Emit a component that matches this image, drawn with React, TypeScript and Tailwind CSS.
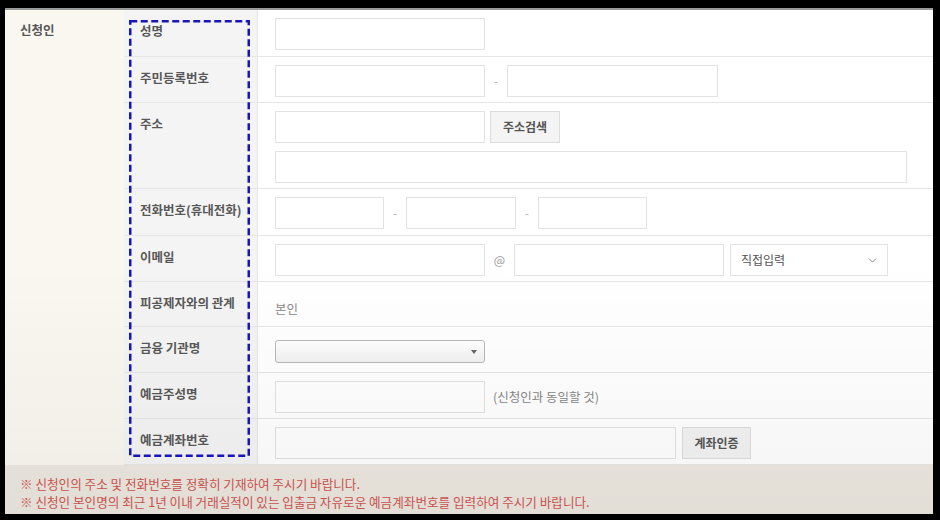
import React from 'react';
import { ChevronDown } from 'lucide-react';

const box = 'h-[32px] border border-[#e2e2e2] bg-white outline-none';
const dash = 'w-[22px] text-center text-[11px] text-[#aaa]';

interface RowProps {
  label: string;
  h: string;
  pad?: string;
  children: React.ReactNode;
}

const Row: React.FC<RowProps> = ({ label, h, pad = 'pt-[8px]', children }) => (
  <div className={`flex border-b border-[#e6e6e6] ${h}`}>
    <div className="w-[134px] shrink-0 border-r border-[#e6e6e6] bg-[#f4f4f4] pl-[16px] pt-[12px] text-[12.5px] leading-[18px] font-semibold text-[#585858]">
      {label}
    </div>
    <div className={`flex-1 pl-[17px] ${pad}`}>{children}</div>
  </div>
);

export default function App() {
  return (
    <div className="w-[940px] h-[520px] bg-black pt-[8px] pl-[5px] pr-[7px] pb-[6px] font-['Noto_Sans_CJK_KR','Noto_Sans',sans-serif]">
      <div className="relative h-full flex flex-col border-t-2 border-[#9a9a9a] bg-white">
        <div className="flex">
          <div className="w-[119px] shrink-0 bg-[#faf7f1] pl-[15px] pt-[11px] text-[12.5px] leading-[18px] font-semibold text-[#585858]">
            신청인
          </div>
          <div className="flex-1 flex flex-col">
            <Row label="성명" h="h-[47px]">
              <input className={`${box} w-[210px]`} />
            </Row>

            <Row label="주민등록번호" h="h-[46px]">
              <div className="flex items-center">
                <input className={`${box} w-[210px]`} />
                <span className={dash}>-</span>
                <input className={`${box} w-[211px]`} />
              </div>
            </Row>

            <Row label="주소" h="h-[86px]">
              <div className="flex flex-col gap-[8px]">
                <div className="flex gap-[5px]">
                  <input className={`${box} w-[210px]`} />
                  <button className="h-[32px] w-[70px] border border-[#dcdcdc] bg-[#f4f4f4] text-[12px] font-semibold text-[#555]">
                    주소검색
                  </button>
                </div>
                <input className={`${box} w-[632px]`} />
              </div>
            </Row>

            <Row label="전화번호(휴대전화)" h="h-[47px]">
              <div className="flex items-center">
                <input className={`${box} w-[109px]`} />
                <span className={dash}>-</span>
                <input className={`${box} w-[110px]`} />
                <span className={dash}>-</span>
                <input className={`${box} w-[109px]`} />
              </div>
            </Row>

            <Row label="이메일" h="h-[46px]">
              <div className="flex items-center">
                <input className={`${box} w-[210px]`} />
                <span className="w-[29px] text-center text-[12px] text-[#999]">@</span>
                <input className={`${box} w-[210px]`} />
                <div className="ml-[6px] flex h-[32px] w-[158px] items-center justify-between border border-[#e2e2e2] bg-white pl-[10px] pr-[8px] text-[12px] text-[#555]">
                  <span>직접입력</span>
                  <ChevronDown size={13} strokeWidth={1.5} color="#777" />
                </div>
              </div>
            </Row>

            <Row label="피공제자와의 관계" h="h-[45px]" pad="pt-[13px]">
              <span className="text-[12.5px] leading-[18px] text-[#888]">본인</span>
            </Row>

            <Row label="금융 기관명" h="h-[46px]" pad="pt-[13px]">
              <div className="flex h-[23px] w-[210px] items-center justify-end rounded-[3px] border border-[#b9b9b9] bg-gradient-to-b from-white to-[#f1f1f1] pr-[7px]">
                <span className="border-x-[3px] border-t-[4px] border-x-transparent border-t-[#666]" />
              </div>
            </Row>

            <Row label="예금주성명" h="h-[46px]">
              <div className="flex items-center gap-[8px]">
                <input className={`${box} w-[210px] bg-[#f5f5f5]`} />
                <span className="text-[12.5px] text-[#888]">(신청인과 동일할 것)</span>
              </div>
            </Row>

            <Row label="예금계좌번호" h="h-[46px]">
              <div className="flex gap-[6px]">
                <input className={`${box} w-[401px] bg-[#f4f4f4]`} />
                <button className="h-[32px] w-[69px] border border-[#dcdcdc] bg-[#f2f2f2] text-[12px] font-semibold text-[#555]">
                  계좌인증
                </button>
              </div>
            </Row>
          </div>
        </div>

        <div className="flex-1 bg-[#ece7df] pl-[15px] pt-[10px] text-[12.6px] leading-[18px] text-[#cf554f]">
          <p>※ 신청인의 주소 및 전화번호를 정확히 기재하여 주시기 바랍니다.</p>
          <p>※ 신청인 본인명의 최근 1년 이내 거래실적이 있는 입출금 자유로운 예금계좌번호를 입력하여 주시기 바랍니다.</p>
        </div>

        {/* video shading */}
        <div className="pointer-events-none absolute inset-0 bg-gradient-to-b from-transparent via-transparent to-black/[0.04]" />

        {/* annotation box */}
        <svg className="pointer-events-none absolute left-[124px] top-[10px]" width="121" height="437">
          <rect x="1.25" y="1.25" width="118.5" height="434.5" fill="none" stroke="#1717b8" strokeWidth="2.5" strokeDasharray="7 3.5" />
        </svg>
      </div>
    </div>
  );
}
